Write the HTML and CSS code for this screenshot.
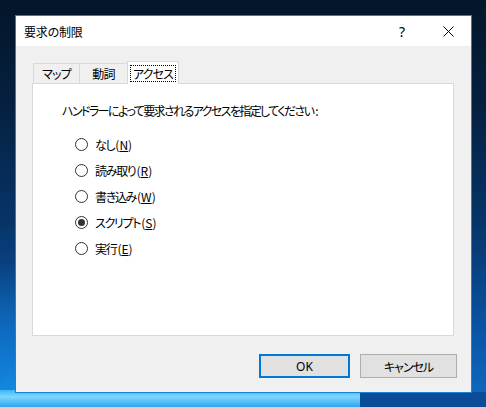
FILE: index.html
```html
<!DOCTYPE html>
<html lang="ja">
<head>
<meta charset="utf-8">
<link rel="stylesheet" href="styles.css">
</head>
<body>
<div class="desktop">
  <div class="streak s1"></div>
  <div class="streak s2"></div>
  <div class="dialog">
    <div class="titlebar">
      <span class="title">要求の制限</span>
      <span class="cap help">?</span>
      <span class="cap close"><svg width="11" height="11" viewBox="0 0 11 11"><path d="M0.5 0.5 L10.5 10.5 M10.5 0.5 L0.5 10.5" stroke="#000" stroke-width="1" fill="none"/></svg></span>
    </div>
    <div class="body">
      <div class="tabs">
        <div class="tab t1">マップ</div>
        <div class="tab t2">動詞</div>
        <div class="tab sel"><span class="focus">アクセス</span></div>
      </div>
      <div class="panel">
        <div class="heading">ハンドラーによって要求されるアクセスを指定してください<span class="colon">:</span></div>
        <div class="options">
          <div class="opt"><span class="radio"></span><span>なし</span><span class="acc">(<u>N</u>)</span></div>
          <div class="opt"><span class="radio"></span><span>読み取り</span><span class="acc">(<u>R</u>)</span></div>
          <div class="opt"><span class="radio"></span><span>書き込み</span><span class="acc">(<u>W</u>)</span></div>
          <div class="opt"><span class="radio on"></span><span>スクリプト</span><span class="acc">(<u>S</u>)</span></div>
          <div class="opt"><span class="radio"></span><span>実行</span><span class="acc">(<u>E</u>)</span></div>
        </div>
      </div>
      <div class="buttons">
        <div class="btn ok">OK</div>
        <div class="btn cancel">キャンセル</div>
      </div>
    </div>
  </div>
</div>
</body>
</html>
```
FILE: styles.css
```css
html, body { margin: 0; padding: 0; }
body {
  width: 486px; height: 407px; overflow: hidden;
  font-family: "Noto Sans CJK JP", "Noto Sans", sans-serif;
  font-size: 12px; color: #000;
  font-feature-settings: "palt";
}
.desktop {
  position: relative;
  width: 486px; height: 407px; box-sizing: border-box;
  padding: 15px 0 0 15px;
  background:
    radial-gradient(ellipse 260px 160px at 60px 420px, #1aa0f0 0%, rgba(20,140,230,0.6) 40%, rgba(10,80,170,0) 100%),
    linear-gradient(180deg, #031629 0%, #05203f 25%, #073569 55%, #0b59ad 85%, #0f6cc4 100%);
}
.streak { position: absolute; }
.s1 { left: 0; top: 390px; width: 380px; height: 17px;
  background: linear-gradient(180deg, #3ab8f5 0%, #7fd6ff 40%, #2aa6f0 100%); }
.s2 { left: 360px; top: 392px; width: 126px; height: 15px; background: #0b4c98; }
.dialog {
  position: relative; z-index: 1;
  width: 457px; height: 378px; box-sizing: border-box;
  border: 1px solid #1883d7; background: #f0f0f0;
  display: flex; flex-direction: column;
}
.titlebar {
  height: 30px; background: #fff;
  display: flex; align-items: center;
  padding-left: 8px;
}
.title { flex: 1; font-size: 12px; letter-spacing: -0.2px; }
.cap { width: 46px; height: 30px; display: flex; align-items: center; justify-content: center; }
.help { font-family: "Noto Sans", sans-serif; font-size: 14px; }
.body { flex: 1; padding: 0 16px; display: flex; flex-direction: column; }
.tabs { display: flex; margin-top: 15px; padding-left: 1px; height: 22px; align-items: flex-end; position: relative; z-index: 2; }
.tab {
  height: 20px; box-sizing: border-box;
  border: 1px solid #d9d9d9; border-bottom: none;
  background: #f0f0f0;
  display: flex; align-items: center; justify-content: center;
  letter-spacing: -0.8px;
}
.t1 { width: 47px; }
.t2 { width: 48px; border-left: none; }
.sel {
  width: 52px; height: 23px; margin-left: -1px; margin-bottom: -1px;
  background: #fff; border-color: #d9d9d9;
}
.focus { outline: 1px dotted #000; outline-offset: 0; padding: 0 2px; line-height: 15px; }
.panel {
  width: 422px; height: 253px; box-sizing: border-box;
  border: 1px solid #d9d9d9; background: #fff;
  padding: 18px 0 0 29px;
}
.heading { line-height: 18px; letter-spacing: -1.6px; }
.colon { letter-spacing: 0; margin-left: 2px; }
.options { padding: 15px 0 0 13px; display: flex; flex-direction: column; gap: 8px; }
.opt { display: flex; align-items: center; height: 18px; letter-spacing: -1.3px; }
.acc { letter-spacing: 0; margin-left: 1px; }
.radio {
  width: 13px; height: 13px; box-sizing: border-box;
  border: 1px solid #333; border-radius: 50%; background: #fff;
  margin-right: 7px; position: relative;
}
.radio.on::after {
  content: ""; position: absolute; left: 2px; top: 2px;
  width: 7px; height: 7px; border-radius: 50%; background: #333;
}
u { text-decoration: underline; text-underline-offset: 1px; }
.buttons { display: flex; justify-content: flex-end; gap: 10px; margin-top: 18px; margin-right: -2px; }
.btn {
  height: 24px; box-sizing: border-box;
  background: #e1e1e1; display: flex; align-items: center; justify-content: center;
}
.ok { width: 91px; border: 2px solid #0078d7; font-family: "Noto Sans", sans-serif; }
.cancel { width: 97px; border: 1px solid #adadad; letter-spacing: -1px; }
```
